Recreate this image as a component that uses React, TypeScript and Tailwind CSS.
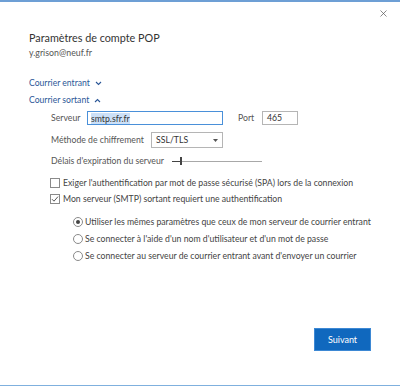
import { X } from 'lucide-react';

const font = "font-['Lato','Noto_Sans',sans-serif]";

function Checkbox({ checked, label }: { checked?: boolean; label: string }) {
  return (
    <div className="flex items-center h-[16px]">
      <span className="w-[10px] h-[10px] border border-[#8a8a8a] bg-white flex items-center justify-center mr-[3px]">
        {checked ? (
          <svg width="8" height="8" viewBox="0 0 8 8">
            <path d="M1 4.2 L3 6.2 L7 1.6" fill="none" stroke="#444" strokeWidth="0.9" />
          </svg>
        ) : null}
      </span>
      <span>{label}</span>
    </div>
  );
}

function Radio({ checked, label }: { checked?: boolean; label: string }) {
  return (
    <div className="flex items-center h-[17px]">
      <span className="w-[10px] h-[10px] rounded-full border border-[#8a8a8a] bg-white flex items-center justify-center mr-[2px]">
        {checked ? <span className="w-[4px] h-[4px] rounded-full bg-[#444]" /> : null}
      </span>
      <span>{label}</span>
    </div>
  );
}

export default function App() {
  return (
    <div
      className={`${font} relative w-[400px] h-[386px] bg-white border-t-2 border-t-[#6d9fd5] border-b border-b-[#7fb0de] text-[#444] text-[8.7px] leading-[12px] overflow-hidden whitespace-nowrap`}
    >
      <button type="button" className="absolute right-[11px] top-[6px] text-[#555]">
        <X size={11} strokeWidth={1.5} />
      </button>

      <div className="pl-[29px] pt-[28px]">
        <h1 className="text-[10.8px] leading-[16px] text-[#333]">Paramètres de compte POP</h1>
        <p className="text-[8.8px] leading-[12px] mt-[1px] text-[#555]">y.grison@neuf.fr</p>

        <div className="mt-[17px] flex flex-col gap-[3px] text-[#2b5797] text-[8.6px] leading-[14px]">
          <div className="flex items-center gap-[5px]">
            Courrier entrant
            <svg width="7" height="5" viewBox="0 0 7 5">
              <path d="M1 1 L3.5 3.5 L6 1" fill="none" stroke="#2b5797" strokeWidth="1.1" />
            </svg>
          </div>
          <div className="flex items-center gap-[5px]">
            Courrier sortant
            <svg width="7" height="5" viewBox="0 0 7 5">
              <path d="M1 4 L3.5 1.5 L6 4" fill="none" stroke="#2b5797" strokeWidth="1.1" />
            </svg>
          </div>
        </div>

        <div className="pl-[22px] mt-[2px] text-[#555]">
          <div className="flex items-center h-[18px]">
            <span className="w-[36px]">Serveur</span>
            <div className="w-[136px] h-[14px] border border-[#4a90d9] flex items-center px-[3px]">
              <span className="bg-[#cce0f7] text-[#333] leading-[11px]">smtp.sfr.fr</span>
            </div>
            <span className="ml-[15px] w-[24px]">Port</span>
            <div className="w-[36px] h-[14px] border border-[#b5b5b5] flex items-center px-[4px] text-[#333]">
              465
            </div>
          </div>

          <div className="flex items-center h-[20px] mt-[3px]">
            <span className="w-[100px]">Méthode de chiffrement</span>
            <div className="w-[72px] h-[16px] border border-[#b5b5b5] flex items-center justify-between px-[4px] text-[#333]">
              SSL/TLS
              <svg width="5" height="3" viewBox="0 0 5 3">
                <path d="M0 0 L5 0 L2.5 3 Z" fill="#555" />
              </svg>
            </div>
          </div>

          <div className="flex items-center h-[18px] mt-[2px]">
            <span className="w-[121px]">Délais d'expiration du serveur</span>
            <div className="relative w-[90px] h-[8px] flex items-center">
              <div className="w-full h-px bg-[#a8a8a8]" />
              <div className="absolute left-[8px] top-0 w-[1.5px] h-[8px] bg-[#444]" />
              <div className="absolute left-0 top-[3.5px] w-[8px] h-px bg-[#444]" />
            </div>
          </div>

          <div className="-ml-[1px] mt-[5px] text-[#444]">
            <Checkbox label="Exiger l'authentification par mot de passe sécurisé (SPA) lors de la connexion" />
            <Checkbox checked label="Mon serveur (SMTP) sortant requiert une authentification" />
            <div className="pl-[23px] mt-[6px]">
              <Radio checked label="Utiliser les mêmes paramètres que ceux de mon serveur de courrier entrant" />
              <Radio label="Se connecter à l'aide d'un nom d'utilisateur et d'un mot de passe" />
              <Radio label="Se connecter au serveur de courrier entrant avant d'envoyer un courrier" />
            </div>
          </div>
        </div>
      </div>

      <div className="absolute right-[29px] bottom-[34px]">
        <button
          type="button"
          className="w-[57px] h-[23px] bg-[#1068be] border border-[#3d88d4] text-white text-[9px]"
        >
          Suivant
        </button>
      </div>
    </div>
  );
}
